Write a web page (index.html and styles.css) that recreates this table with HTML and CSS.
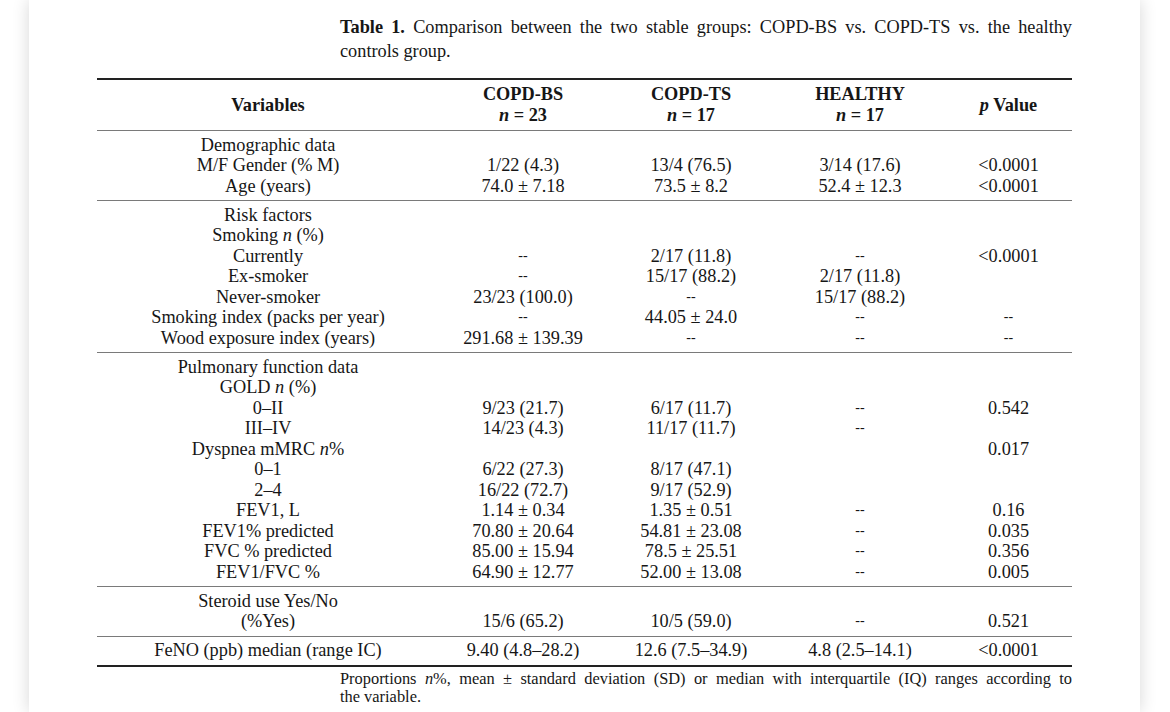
FILE: index.html
```html
<!DOCTYPE html>
<html lang="en">
<head>
<meta charset="utf-8">
<title>Table 1</title>
<link rel="stylesheet" href="styles.css">
</head>
<body>
<div class="page">
  <div class="caption">
    <div class="cap-line"><b>Table 1.</b> Comparison between the two stable groups: COPD-BS vs. COPD-TS vs. the healthy</div>
    <div class="cap-last">controls group.</div>
  </div>
  <table class="data">
    <colgroup>
      <col class="c-var"><col class="c-grp"><col class="c-grp"><col class="c-hea"><col class="c-p">
    </colgroup>
    <thead>
      <tr class="first">
        <th rowspan="2">Variables</th>
        <th>COPD-BS</th><th>COPD-TS</th><th>HEALTHY</th>
        <th rowspan="2"><i>p</i> Value</th>
      </tr>
      <tr class="last">
        <th><i>n</i> = 23</th><th><i>n</i> = 17</th><th><i>n</i> = 17</th>
      </tr>
    </thead>
    <tbody>
      <tr class="first"><td>Demographic data</td><td></td><td></td><td></td><td></td></tr>
      <tr><td>M/F Gender (% M)</td><td>1/22 (4.3)</td><td>13/4 (76.5)</td><td>3/14 (17.6)</td><td>&lt;0.0001</td></tr>
      <tr class="last"><td>Age (years)</td><td>74.0 ± 7.18</td><td>73.5 ± 8.2</td><td>52.4 ± 12.3</td><td>&lt;0.0001</td></tr>
    </tbody>
    <tbody>
      <tr class="first"><td>Risk factors</td><td></td><td></td><td></td><td></td></tr>
      <tr><td>Smoking <i>n</i> (%)</td><td></td><td></td><td></td><td></td></tr>
      <tr><td>Currently</td><td class="dd">--</td><td>2/17 (11.8)</td><td class="dd">--</td><td>&lt;0.0001</td></tr>
      <tr><td>Ex-smoker</td><td class="dd">--</td><td>15/17 (88.2)</td><td>2/17 (11.8)</td><td></td></tr>
      <tr><td>Never-smoker</td><td>23/23 (100.0)</td><td class="dd">--</td><td>15/17 (88.2)</td><td></td></tr>
      <tr><td>Smoking index (packs per year)</td><td class="dd">--</td><td>44.05 ± 24.0</td><td class="dd">--</td><td class="dd">--</td></tr>
      <tr class="last"><td>Wood exposure index (years)</td><td>291.68 ± 139.39</td><td class="dd">--</td><td class="dd">--</td><td class="dd">--</td></tr>
    </tbody>
    <tbody>
      <tr class="first"><td>Pulmonary function data</td><td></td><td></td><td></td><td></td></tr>
      <tr><td>GOLD <i>n</i> (%)</td><td></td><td></td><td></td><td></td></tr>
      <tr><td>0–II</td><td>9/23 (21.7)</td><td>6/17 (11.7)</td><td class="dd">--</td><td>0.542</td></tr>
      <tr><td>III–IV</td><td>14/23 (4.3)</td><td>11/17 (11.7)</td><td class="dd">--</td><td></td></tr>
      <tr><td>Dyspnea mMRC <i>n</i>%</td><td></td><td></td><td></td><td>0.017</td></tr>
      <tr><td>0–1</td><td>6/22 (27.3)</td><td>8/17 (47.1)</td><td></td><td></td></tr>
      <tr><td>2–4</td><td>16/22 (72.7)</td><td>9/17 (52.9)</td><td></td><td></td></tr>
      <tr><td>FEV1, L</td><td>1.14 ± 0.34</td><td>1.35 ± 0.51</td><td class="dd">--</td><td>0.16</td></tr>
      <tr><td>FEV1% predicted</td><td>70.80 ± 20.64</td><td>54.81 ± 23.08</td><td class="dd">--</td><td>0.035</td></tr>
      <tr><td>FVC % predicted</td><td>85.00 ± 15.94</td><td>78.5 ± 25.51</td><td class="dd">--</td><td>0.356</td></tr>
      <tr class="last"><td>FEV1/FVC %</td><td>64.90 ± 12.77</td><td>52.00 ± 13.08</td><td class="dd">--</td><td>0.005</td></tr>
    </tbody>
    <tbody>
      <tr class="first"><td>Steroid use Yes/No</td><td></td><td></td><td></td><td></td></tr>
      <tr class="last"><td>(%Yes)</td><td>15/6 (65.2)</td><td>10/5 (59.0)</td><td class="dd">--</td><td>0.521</td></tr>
    </tbody>
    <tbody class="end">
      <tr class="first last"><td>FeNO (ppb) median (range IC)</td><td>9.40 (4.8–28.2)</td><td>12.6 (7.5–34.9)</td><td>4.8 (2.5–14.1)</td><td>&lt;0.0001</td></tr>
    </tbody>
  </table>
  <div class="note">
    <div class="note-line">Proportions <i>n</i>%, mean ± standard deviation (SD) or median with interquartile (IQ) ranges according to</div>
    <div class="note-last">the variable.</div>
  </div>
</div>
</body>
</html>
```

FILE: styles.css
```css
html, body {
  margin: 0;
  padding: 0;
  background: #ffffff;
  overflow: hidden;
}

body {
  font-family: "Liberation Serif", "Times New Roman", serif;
  color: #161616;
  font-size: 18.3px;
}

.page {
  width: 1111px;
  height: 712px;
  margin-left: 29px;
  background: #ffffff;
  box-shadow: 0 0 16px rgba(0, 0, 0, 0.16);
  padding: 15px 68px 0 68px;
  box-sizing: border-box;
}

.caption {
  margin-left: 243px;
  width: 732px;
  line-height: 24px;
}

.cap-line {
  text-align: justify;
  text-align-last: justify;
}

.data {
  margin-top: 15px;
  width: 975px;
  border-collapse: collapse;
  table-layout: fixed;
  border-top: 2px solid #222;
}

.c-var { width: 342px; }
.c-grp { width: 168px; }
.c-hea { width: 170px; }
.c-p { width: 127px; }

.data th,
.data td {
  text-align: center;
  padding: 0;
  line-height: 20.5px;
  white-space: nowrap;
}

.data th {
  font-weight: bold;
  line-height: 21px;
}

.data thead tr.first th { padding-top: 4px; }
.data thead tr.last th { padding-bottom: 4px; }
.data thead th[rowspan] { padding-bottom: 4px; vertical-align: middle; }

.data thead {
  border-bottom: 1px solid #7a7a7a;
}

.data tbody {
  border-top: 1px solid #7a7a7a;
}

.data tbody tr.first td { padding-top: 3.75px; }
.data tbody tr.last td { padding-bottom: 3.75px; }

.data tbody.end {
  border-bottom: 2px solid #222;
}

.dd {
  font-size: 14px;
}

.note {
  margin-left: 243px;
  width: 732px;
  margin-top: 3px;
  font-size: 16.4px;
  line-height: 18px;
}

.note-line {
  text-align: justify;
  text-align-last: justify;
}
```
